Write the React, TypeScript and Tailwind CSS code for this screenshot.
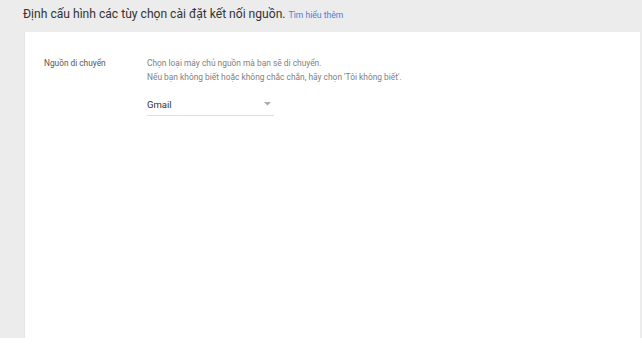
export default function App() {
  return (
    <div className="w-[642px] h-[347px] bg-white font-['Roboto',sans-serif]">
      <div className="h-[338px] bg-[#ececec] flex flex-col pl-6 pr-[2px]">
        {/* Header */}
        <div className="h-8 flex items-start pt-[5px] -ml-[1px]">
          <h1 className="text-[12.1px] leading-[18px] text-[#333]">
            Định cấu hình các tùy chọn cài đặt kết nối nguồn.{" "}
            <a className="text-[8.6px] text-[#4a7ee0]">Tìm hiểu thêm</a>
          </h1>
        </div>

        {/* Card */}
        <div className="flex-1 bg-white border-l border-[#e4e4e4] flex pt-[24px]">
          <div className="w-[122px] pl-[19px] text-[8.3px] leading-[14px] text-[#555]">
            Nguồn di chuyển
          </div>
          <div className="flex flex-col">
            <p className="text-[8.4px] leading-[14px] text-[#808080]">
              Chọn loại máy chủ nguồn mà bạn sẽ di chuyển.
            </p>
            <p className="text-[8.4px] leading-[14px] text-[#808080]">
              Nếu bạn không biết hoặc không chắc chắn, hãy chọn 'Tôi không biết'.
            </p>
            <div className="mt-[11px] w-[127px] h-[21px] border-b border-[#e0e0e0] flex items-center justify-between">
              <span className="text-[9.5px] text-[#333]">Gmail</span>
              <svg width="7" height="4" viewBox="0 0 7 4" className="mr-[3px] mb-[2px]">
                <path d="M0 0 L7 0 L3.5 3.5 Z" fill="#aaa" />
              </svg>
            </div>
          </div>
        </div>
      </div>
    </div>
  );
}
